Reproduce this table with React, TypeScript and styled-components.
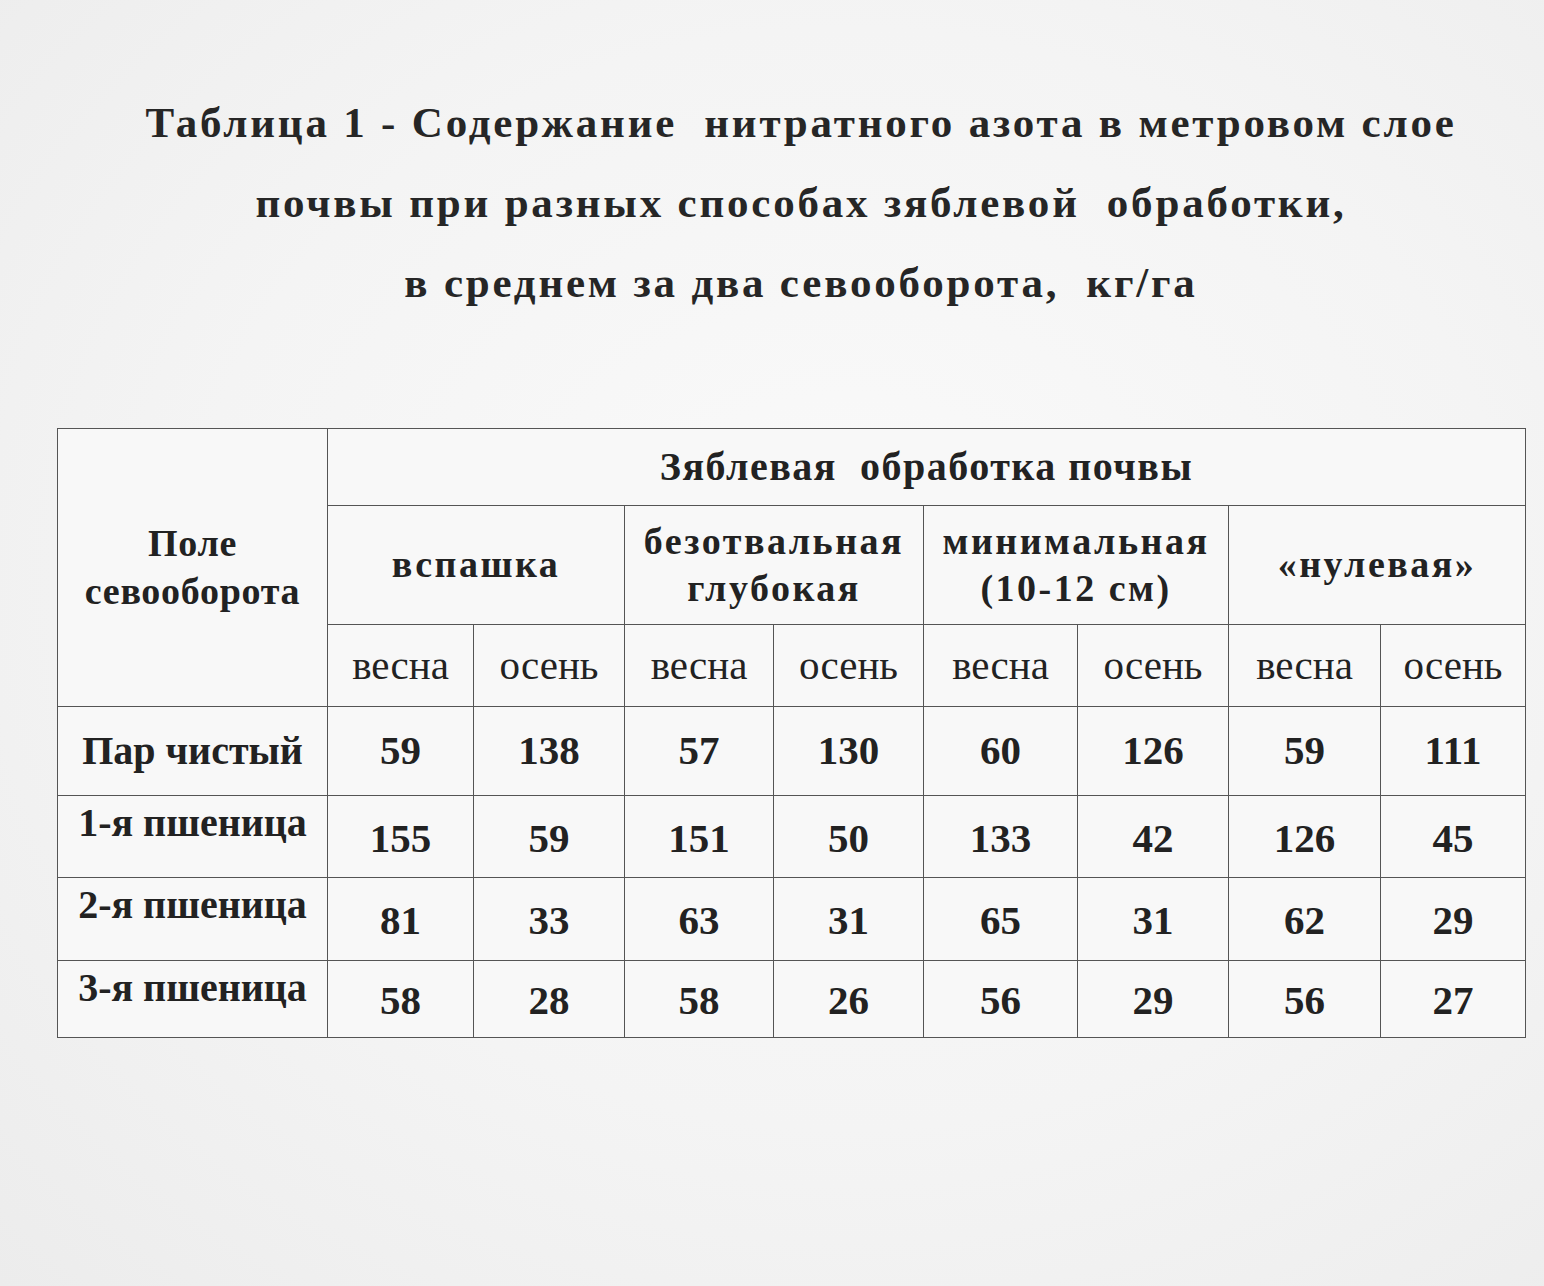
import React from "react";
import styled, { createGlobalStyle } from "styled-components";

const Global = createGlobalStyle`
  html, body { margin: 0; padding: 0; }
  body {
    background: #f3f3f3;
    font-family: "Liberation Serif", "Times New Roman", serif;
    color: #1e1e1e;
  }
`;

const Page = styled.div`
  width: 1544px;
  height: 1286px;
  box-sizing: border-box;
  padding-top: 83px;
  background: radial-gradient(ellipse at 55% 45%, #fafafa 0%, #f4f4f4 55%, #ececec 100%);
  display: flex;
  flex-direction: column;
`;

const Title = styled.h1`
  margin: 0 0 0 58px;
  font-size: 43px;
  font-weight: 700;
  line-height: 80px;
  letter-spacing: 2.8px;
  text-align: center;
  white-space: pre;
  color: #262626;
`;

const Table = styled.table`
  margin: 105px 0 0 57px;
  width: 1468px;
  border-collapse: collapse;
  table-layout: fixed;
  background: #f8f8f8;
  border: 1.5px solid #555;
`;

const Cell = styled.td<{
  $h?: number;
  $bold?: boolean;
  $top?: boolean;
  $ls?: number;
  $size?: number;
  $pt?: number;
}>`
  border: 1.5px solid #555;
  padding: ${(p) => (p.$pt ? `${p.$pt}px 0 0 0` : "0")};
  height: ${(p) => (p.$h ? `${p.$h}px` : "auto")};
  text-align: center;
  vertical-align: ${(p) => (p.$top ? "top" : "middle")};
  font-size: ${(p) => p.$size ?? 40}px;
  font-weight: ${(p) => (p.$bold ? 700 : 400)};
  letter-spacing: ${(p) => p.$ls ?? 0}px;
  line-height: 1.25;
  color: #222;
  white-space: nowrap;
  overflow: visible;
`;

const NumWrap = styled.div<{ $shift: number }>`
  padding-top: ${(p) => p.$shift}px;
  line-height: 1.15;
`;

const cols = [270, 146, 151, 149, 150, 154, 151, 152, 145];

const rows = [
  { label: "Пар чистый", vals: ["59", "138", "57", "130", "60", "126", "59", "111"], top: false, h: 88 },
  { label: "1-я пшеница", vals: ["155", "59", "151", "50", "133", "42", "126", "45"], top: true, h: 79 },
  { label: "2-я пшеница", vals: ["81", "33", "63", "31", "65", "31", "62", "29"], top: true, h: 80 },
  { label: "3-я пшеница", vals: ["58", "28", "58", "26", "56", "29", "56", "27"], top: true, h: 74 },
];

const groups = [
  { key: "a", lines: ["вспашка"] },
  { key: "b", lines: ["безотвальная", "глубокая"] },
  { key: "c", lines: ["минимальная", "(10-12 см)"] },
  { key: "d", lines: ["«нулевая»"] },
];

export default function App() {
  return (
    <>
      <Global />
      <Page>
        <Title>
          {"Таблица 1 - Содержание  нитратного азота в метровом слое\nпочвы при разных способах зяблевой  обработки,\nв среднем за два севооборота,  кг/га"}
        </Title>
        <Table>
          <colgroup>
            {cols.map((w, i) => (
              <col key={i} style={{ width: `${w}px` }} />
            ))}
          </colgroup>
          <tbody>
            <tr>
              <Cell rowSpan={3} $bold $size={38} $ls={0.7}>
                Поле
                <br />
                севооборота
              </Cell>
              <Cell colSpan={8} $h={76} $bold $size={40} $ls={1.5}>
                Зяблевая&nbsp; обработка почвы
              </Cell>
            </tr>
            <tr>
              {groups.map((g) => (
                <Cell key={g.key} colSpan={2} $h={118} $bold $ls={2.5} $size={38}>
                  {g.lines.map((l, i) => (
                    <React.Fragment key={i}>
                      {i > 0 && <br />}
                      {l}
                    </React.Fragment>
                  ))}
                </Cell>
              ))}
            </tr>
            <tr>
              {Array.from({ length: 8 }).map((_, i) => (
                <Cell key={i} $h={81} $size={41}>
                  {i % 2 === 0 ? "весна" : "осень"}
                </Cell>
              ))}
            </tr>
            {rows.map((r) => (
              <tr key={r.label}>
                <Cell $h={r.h} $bold $top={r.top} $pt={r.top ? 2 : 0} $size={40}>
                  {r.label}
                </Cell>
                {r.vals.map((v, i) => (
                  <Cell key={i} $bold $size={41}>
                    <NumWrap $shift={r.top ? 4 : 0}>{v}</NumWrap>
                  </Cell>
                ))}
              </tr>
            ))}
          </tbody>
        </Table>
      </Page>
    </>
  );
}
